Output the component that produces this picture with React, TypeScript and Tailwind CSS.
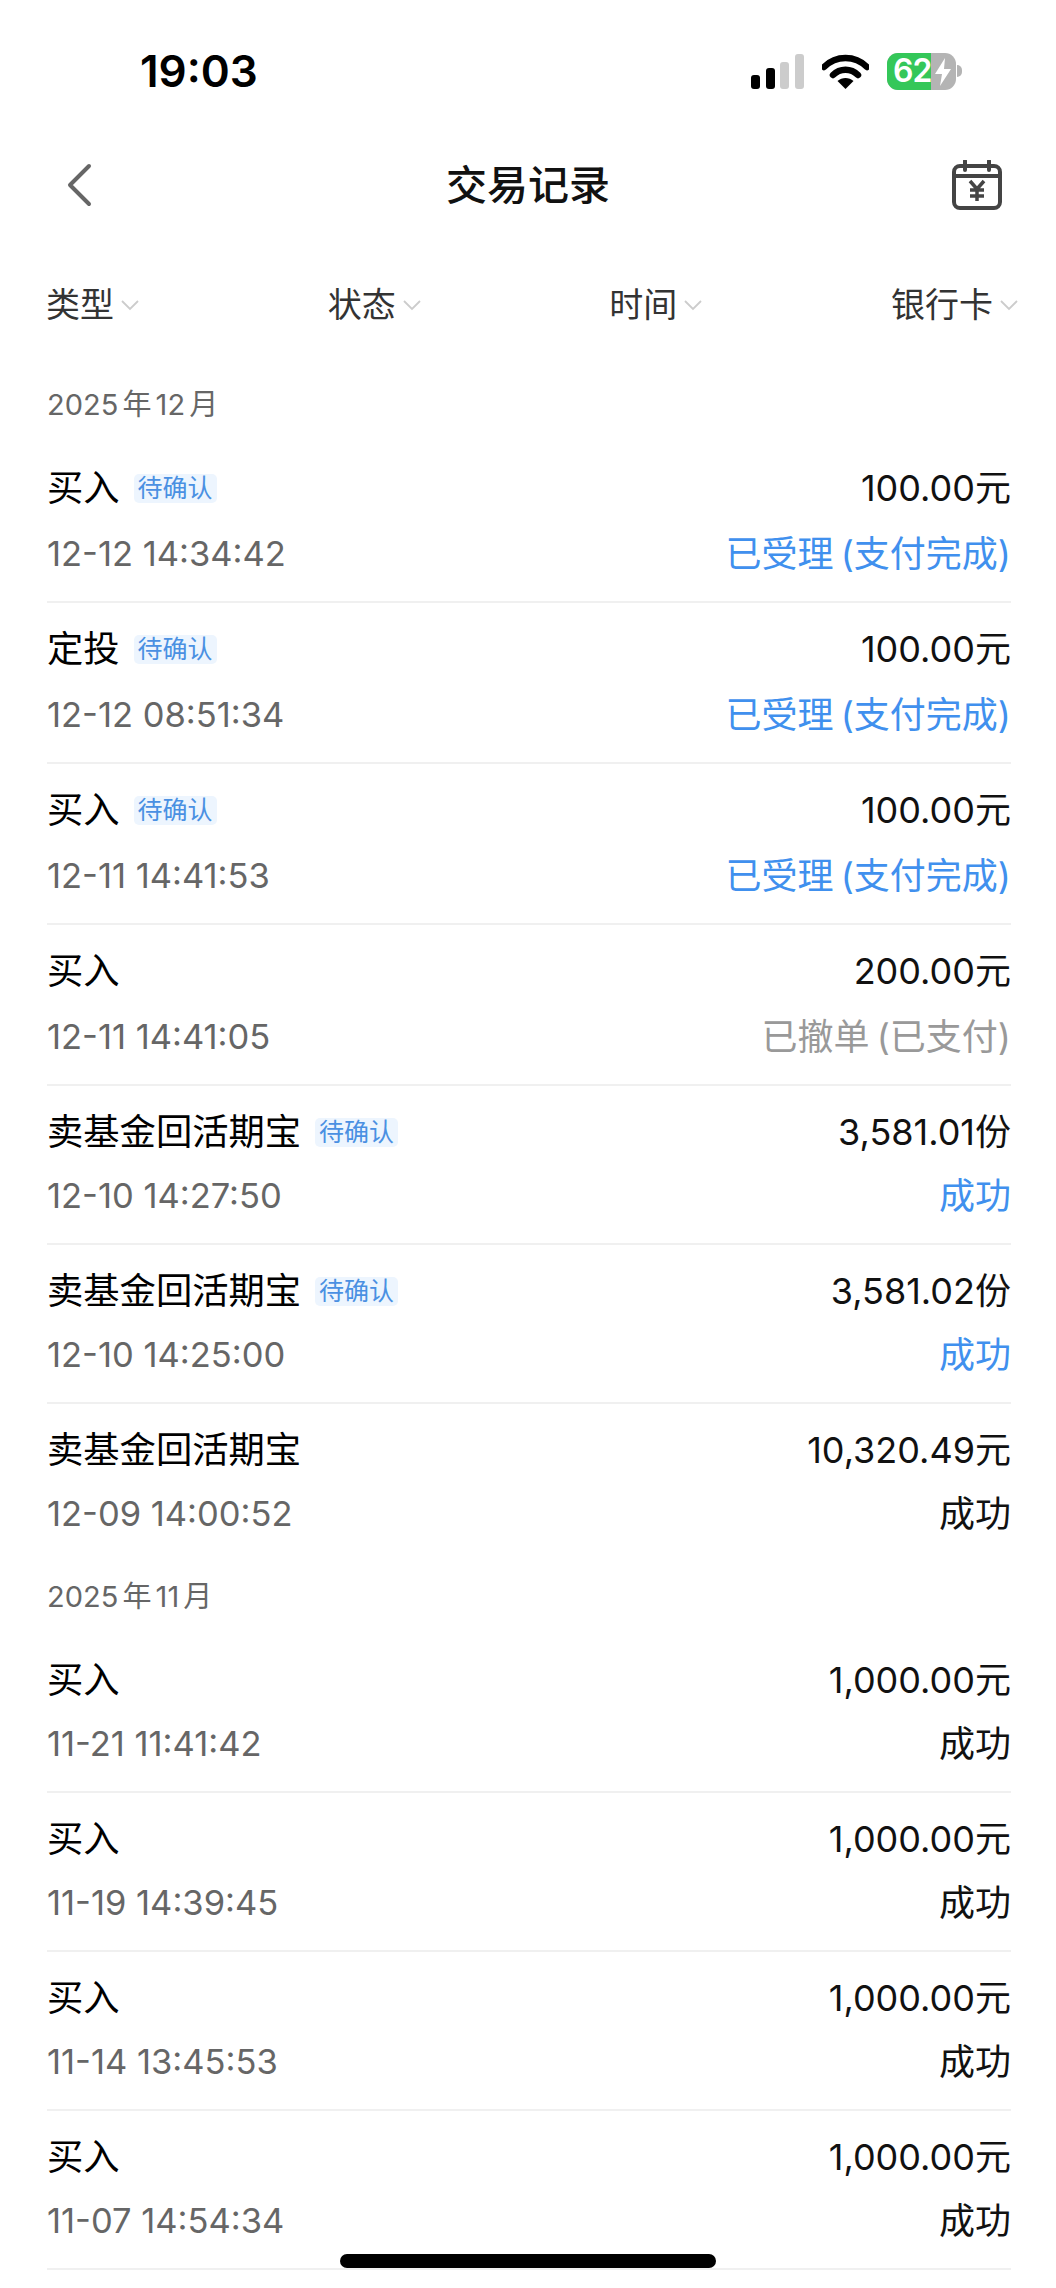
const font = "font-['Inter','Noto_Sans_CJK_SC',sans-serif]";

type Tx = {
  label: string;
  pending?: boolean;
  time: string;
  amount: string;
  status: string;
  tone: 'blue' | 'gray' | 'dark';
  tall?: boolean;
  last?: boolean;
};

const december: Tx[] = [
  { label: '买入', pending: true, time: '12-12 14:34:42', amount: '100.00元', status: '已受理 (支付完成)', tone: 'blue', tall: true },
  { label: '定投', pending: true, time: '12-12 08:51:34', amount: '100.00元', status: '已受理 (支付完成)', tone: 'blue', tall: true },
  { label: '买入', pending: true, time: '12-11 14:41:53', amount: '100.00元', status: '已受理 (支付完成)', tone: 'blue', tall: true },
  { label: '买入', time: '12-11 14:41:05', amount: '200.00元', status: '已撤单 (已支付)', tone: 'gray', tall: true },
  { label: '卖基金回活期宝', pending: true, time: '12-10 14:27:50', amount: '3,581.01份', status: '成功', tone: 'blue' },
  { label: '卖基金回活期宝', pending: true, time: '12-10 14:25:00', amount: '3,581.02份', status: '成功', tone: 'blue' },
  { label: '卖基金回活期宝', time: '12-09 14:00:52', amount: '10,320.49元', status: '成功', tone: 'dark', last: true },
];

const november: Tx[] = [
  { label: '买入', time: '11-21 11:41:42', amount: '1,000.00元', status: '成功', tone: 'dark' },
  { label: '买入', time: '11-19 14:39:45', amount: '1,000.00元', status: '成功', tone: 'dark' },
  { label: '买入', time: '11-14 13:45:53', amount: '1,000.00元', status: '成功', tone: 'dark' },
  { label: '买入', time: '11-07 14:54:34', amount: '1,000.00元', status: '成功', tone: 'dark' },
];

function StatusBar() {
  return (
    <div className="flex h-[142px] items-center justify-between pl-[140px] pr-[94px]">
      <span className="text-[44px] leading-none font-semibold text-black">19:03</span>
      <div className="flex items-center">
        <svg width="53" height="35" viewBox="0 0 53 35" className="mr-[18px]">
          <rect x="0" y="21" width="9" height="14" rx="3" fill="#000" />
          <rect x="15" y="14" width="9" height="21" rx="3" fill="#000" />
          <rect x="29" y="8" width="9" height="27" rx="3" fill="#ccc" />
          <rect x="44" y="0" width="9" height="35" rx="3" fill="#ccc" />
        </svg>
        <svg width="47" height="35" viewBox="0 0 47 35" className="mr-[18px]">
          <path d="M2 13 C14 1 33 1 45 13" fill="none" stroke="#000" strokeWidth="6.5" strokeLinecap="round" />
          <path d="M11 21 C18 14 29 14 36 21" fill="none" stroke="#000" strokeWidth="6.5" strokeLinecap="round" />
          <path d="M23.5 35 L15.5 27 C20 23 27 23 31.5 27 Z" fill="#000" />
        </svg>
        <div className="relative flex h-[37px] w-[69px] items-center overflow-hidden rounded-[11px] bg-[#b4b4b4]">
          <div className="absolute inset-y-0 left-0 w-[44px] bg-[#34c759]" />
          <span className="relative pl-[6px] text-[32px] leading-none font-semibold tracking-[-1px] text-white">62</span>
          <svg width="18" height="28" viewBox="0 0 18 28" className="absolute right-[4px] top-[5px]">
            <path d="M11 0 L1 16 H8 L6 28 L17 11 H10 Z" fill="#fff" />
          </svg>
        </div>
        <div className="ml-[1px] h-[12px] w-[5px] rounded-r-full bg-[#b4b4b4]" />
      </div>
    </div>
  );
}

function NavBar() {
  return (
    <div className="grid h-[86px] grid-cols-[1fr_auto_1fr] items-center px-[54px]">
      <svg width="26" height="44" viewBox="0 0 26 44" className="ml-[12px]">
        <path d="M23 3 L4 22 L23 41" fill="none" stroke="#666" strokeWidth="4" strokeLinecap="round" strokeLinejoin="round" />
      </svg>
      <h1 className="text-[41px] leading-none font-medium text-[#111]">交易记录</h1>
      <svg width="50" height="50" viewBox="0 0 50 50" className="justify-self-end">
        <rect x="2" y="6" width="46" height="42" rx="6" fill="none" stroke="#444" strokeWidth="4" />
        <path d="M2 16 H48 M13 1 V10 M37 1 V10" fill="none" stroke="#444" strokeWidth="4" strokeLinecap="round" />
        <path d="M18 21 L25 29 L32 21 M25 29 V41 M18 30 H32 M18 36 H32" fill="none" stroke="#444" strokeWidth="3.5" />
      </svg>
    </div>
  );
}

function FilterItem({ name }: { name: string }) {
  return (
    <div className="flex items-center gap-[7px]">
      <span className="text-[34px] leading-none text-[#333]">{name}</span>
      <svg width="18" height="12" viewBox="0 0 18 12">
        <path d="M1 2 L9 10 L17 2" fill="none" stroke="#ccc" strokeWidth="1.8" />
      </svg>
    </div>
  );
}

function Row({ tx }: { tx: Tx }) {
  const toneClass =
    tx.tone === 'blue' ? 'text-[#4090ee]' : tx.tone === 'gray' ? 'text-[#999]' : 'text-[#111]';
  return (
    <div
      className={`pt-[28px] ${tx.tall ? 'h-[161px]' : 'h-[159px]'} ${tx.last ? '' : 'border-b-2 border-[#f0f0f0]'}`}
    >
      <div className="flex h-[36px] items-center justify-between">
        <div className="flex items-center">
          <span className="text-[36.3px] leading-none text-black">{tx.label}</span>
          {tx.pending && (
            <span className="ml-[14px] flex h-[29px] w-[83px] items-center justify-center rounded-[5px] bg-[#edf5fe] text-[25px] leading-none text-[#4a90e2]">
              待确认
            </span>
          )}
        </div>
        <span className="text-[36px] leading-none text-[#111]">{tx.amount}</span>
      </div>
      <div className={`flex h-[36px] items-center justify-between ${tx.tall ? 'mt-[30px]' : 'mt-[28px]'}`}>
        <span className="text-[34.5px] leading-none text-[#666]">{tx.time}</span>
        <span className={`text-[36px] leading-none [word-spacing:-3px] ${toneClass}`}>{tx.status}</span>
      </div>
    </div>
  );
}

function Month({ title, rows }: { title: string; rows: Tx[] }) {
  return (
    <section>
      <div className="flex h-[71px] items-center pb-[5px] text-[29px] leading-none text-[#666] [word-spacing:-4px]">
        {title}
      </div>
      {rows.map((tx) => (
        <Row key={tx.time} tx={tx} />
      ))}
    </section>
  );
}

export default function App() {
  return (
    <div className={`relative h-[2288px] w-[1056px] overflow-hidden bg-white ${font}`}>
      <StatusBar />
      <NavBar />
      <div className="mt-[37px] flex h-[80px] items-center justify-between pl-[46px] pr-[38px]">
        <FilterItem name="类型" />
        <FilterItem name="状态" />
        <FilterItem name="时间" />
        <FilterItem name="银行卡" />
      </div>
      <div className="mt-[26px] pl-[47px] pr-[45px]">
        <Month title="2025 年 12 月" rows={december} />
        <Month title="2025 年 11 月" rows={november} />
      </div>
      <div className="absolute bottom-[20px] left-[340px] h-[14px] w-[376px] rounded-full bg-black" />
    </div>
  );
}
